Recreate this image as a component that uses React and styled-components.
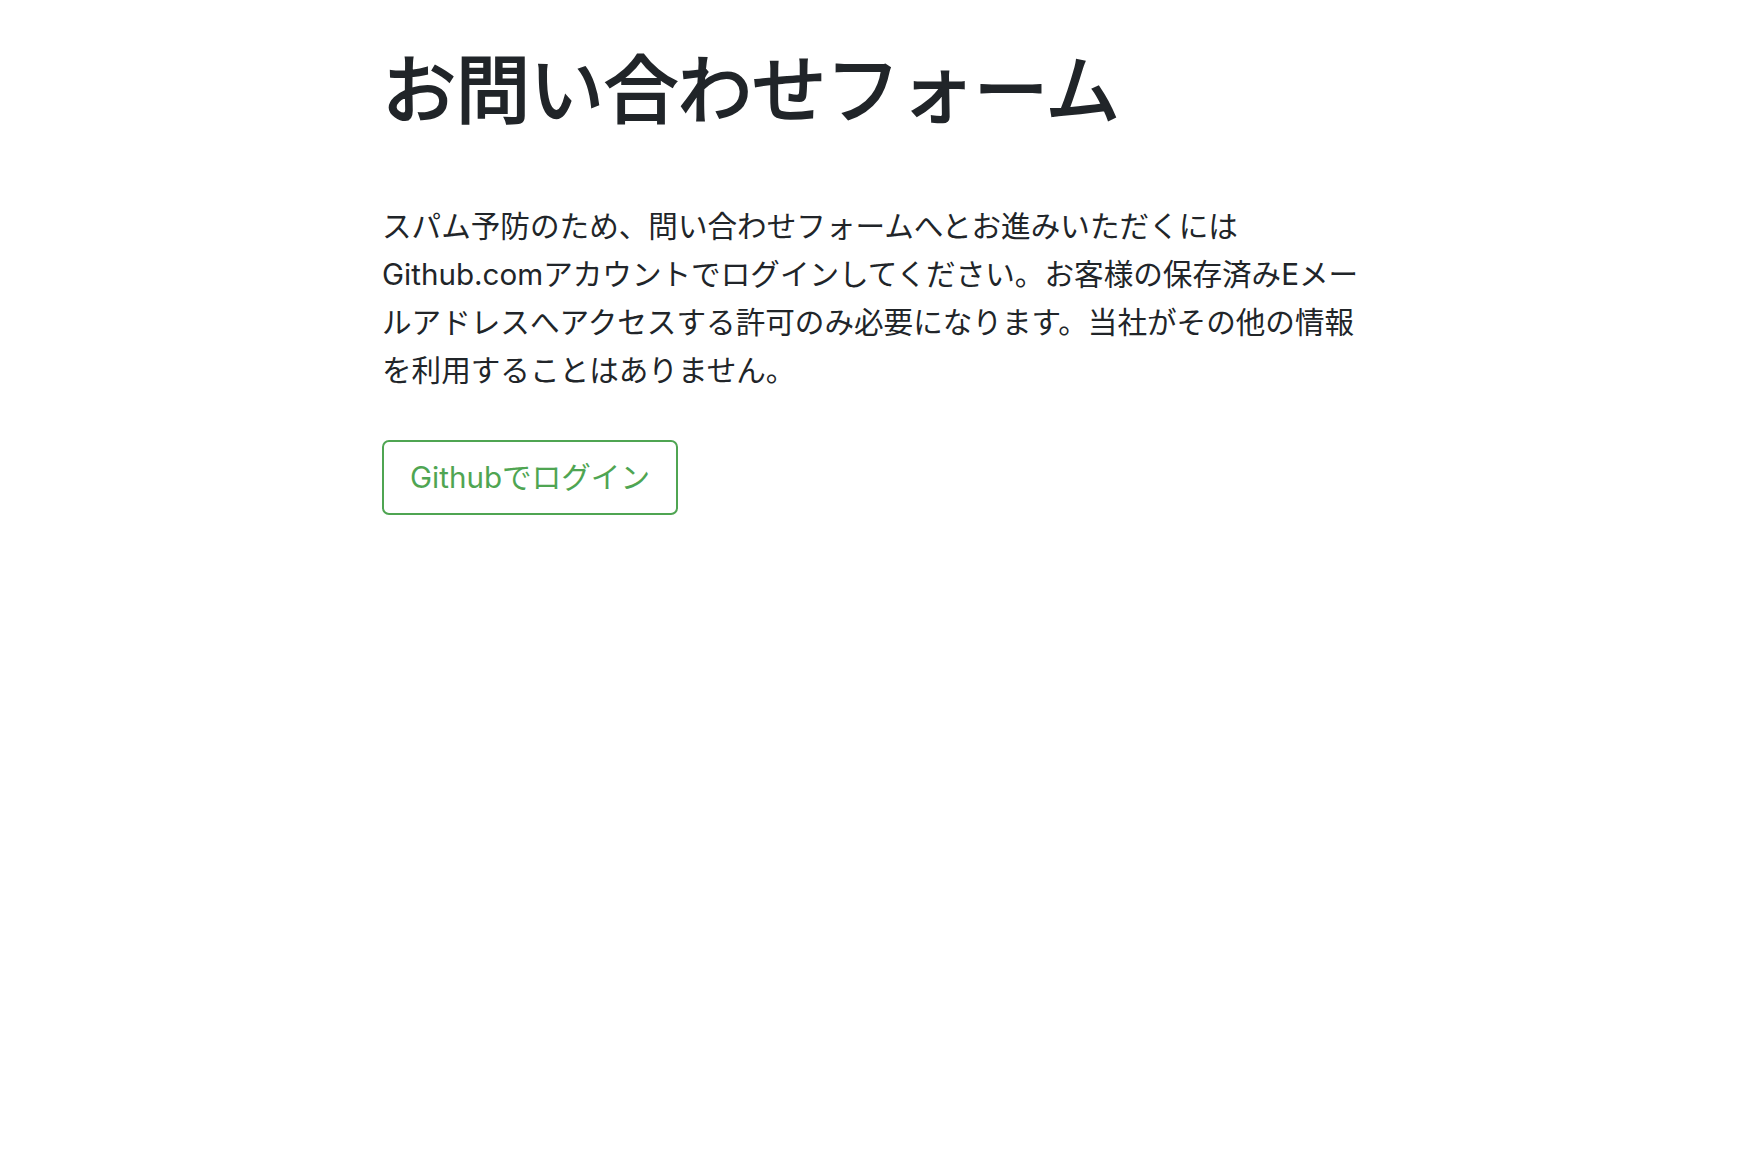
import React from 'react';
import styled, { createGlobalStyle } from 'styled-components';

const GlobalStyle = createGlobalStyle`
  body {
    margin: 0;
    background: #fff;
    color: #212529;
    font-family: Inter, "Noto Sans CJK JP", sans-serif;
  }
`;

const Container = styled.div`
  width: 996px;
  margin: 0 auto;
  padding-top: 46px;
`;

const Title = styled.h1`
  margin: 0 0 67px;
  font-size: 74px;
  font-weight: 400;
  -webkit-text-stroke: 2.2px #212529;
  line-height: 1.2;
  color: #212529;
`;

const Lead = styled.p`
  margin: 0 0 46px;
  font-size: 29.6px;
  line-height: 48px;
`;

const LoginButton = styled.button`
  display: inline-block;
  padding: 13px 26px;
  font-family: inherit;
  font-size: 29.6px;
  line-height: 45px;
  color: #4fa552;
  background: transparent;
  border: 2px solid #4fa552;
  border-radius: 7px;
  cursor: pointer;
`;

// Contact form gate
const App = () => (
  <>
    <GlobalStyle />
    <Container>
      <Title>お問い合わせフォーム</Title>
      <Lead>
        スパム予防のため、問い合わせフォームへとお進みいただくにはGithub.comアカウントでログインしてください。お客様の保存済みEメールアドレスへアクセスする許可のみ必要になります。当社がその他の情報を利用することはありません。
      </Lead>
      <LoginButton>Githubでログイン</LoginButton>
    </Container>
  </>
);

export default App;
